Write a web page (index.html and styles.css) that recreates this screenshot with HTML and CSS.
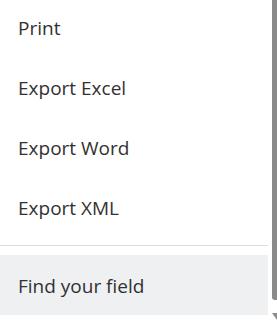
FILE: index.html
```html
<!DOCTYPE html>
<html>
  <head>
    <meta charset="UTF-8">
    <title>Menu</title>
    <link rel="stylesheet" href="styles.css">
  </head>
  <body>
    <div class="frame">
      <ul class="menu">
        <li class="item first">Print</li>
        <li class="item">Export Excel</li>
        <li class="item">Export Word</li>
        <li class="item">Export XML</li>
        <li class="divider"></li>
        <li class="item hover">Find your field</li>
      </ul>
      <div class="scrollbar">
        <div class="thumb"></div>
        <svg class="arrow" width="5" height="8" viewBox="0 0 5 8">
          <polygon points="0,0 5,0 5,7" fill="#8c8c8c"/>
        </svg>
      </div>
    </div>
  </body>
</html>
```

FILE: styles.css
```css
body {
  margin: 0;
  background: #fff;
  font-family: "Open Sans", "Noto Sans", sans-serif;
}
.frame {
  display: flex;
  height: 328px;
}
.menu {
  list-style: none;
  margin: 0;
  padding: 0;
  width: 268px;
}
.item {
  height: 60px;
  line-height: 60px;
  padding-left: 18px;
  font-size: 19px;
  color: #323130;
  box-sizing: border-box;
}
.item.first {
  height: 58px;
  line-height: 56px;
}
.divider {
  height: 1px;
  margin: 7px 0 9px;
  background: #dcdcdc;
}
.item.hover {
  background: #eff0f2;
  padding-top: 3px;
  line-height: 57px;
}
.scrollbar {
  width: 9px;
  display: flex;
  flex-direction: column;
  align-items: flex-end;
}
.thumb {
  width: 5px;
  height: 300px;
  background: #8a8a8a;
  border-bottom-left-radius: 3px;
}
.arrow {
  margin-top: 13px;
}
```
